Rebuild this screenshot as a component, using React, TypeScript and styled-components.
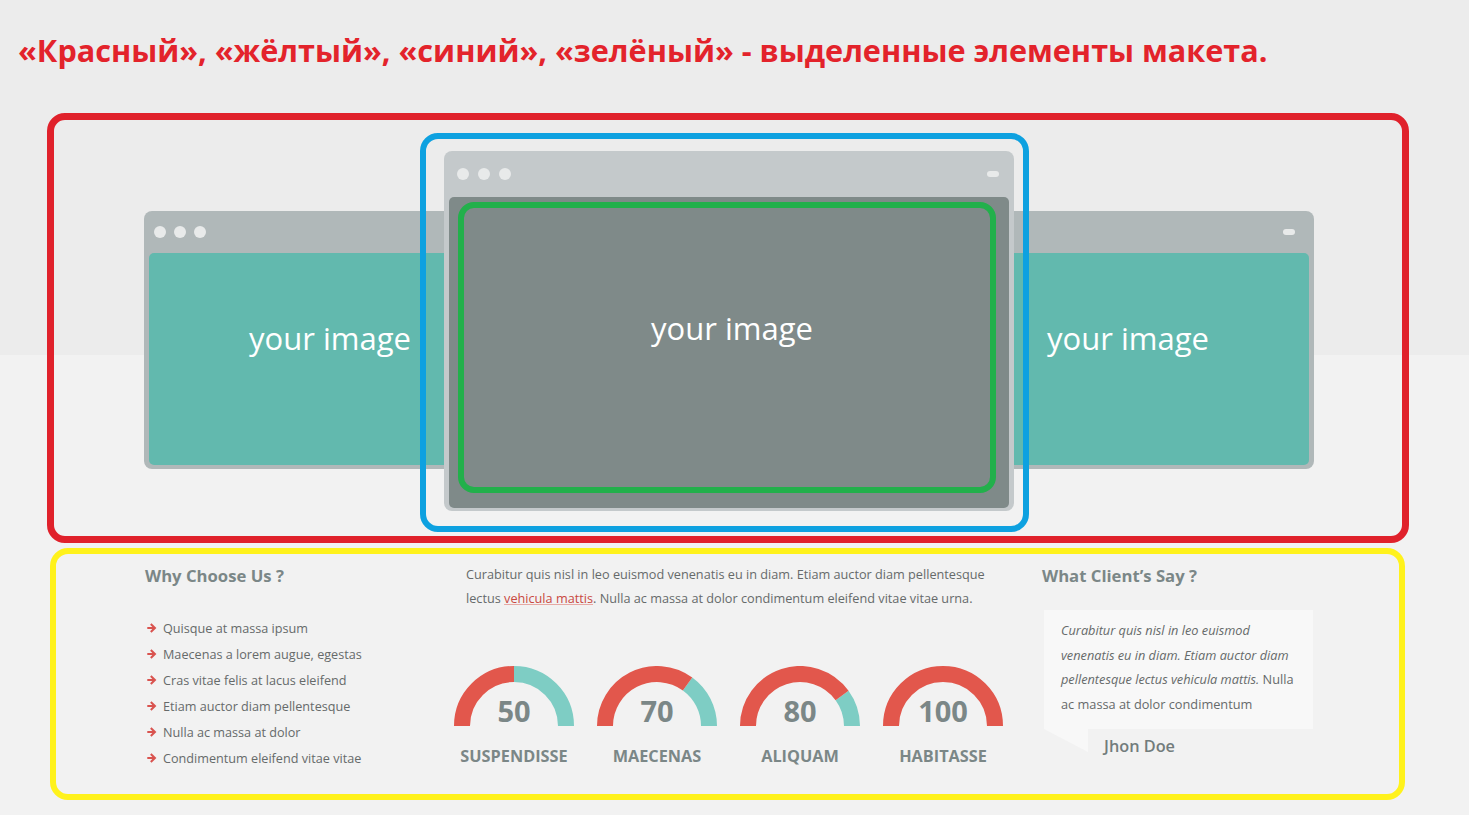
import React from "react";
import styled, { createGlobalStyle } from "styled-components";

const GlobalStyle = createGlobalStyle`
  html, body { margin: 0; padding: 0; }
  body {
    font-family: "Open Sans", "Noto Sans", sans-serif;
    background: #f2f2f2;
  }
`;

const Page = styled.div`
  width: 1469px;
  height: 815px;
  overflow: hidden;
  background: linear-gradient(to bottom, #ececec 0, #ececec 355px, #f2f2f2 355px);
`;

const Title = styled.h1`
  margin: 0;
  padding: 28px 0 0 18px;
  height: 72px;
  box-sizing: border-box;
  font-size: 30.6px;
  line-height: 44px;
  font-weight: 700;
  color: #e3232b;
  white-space: nowrap;
`;

const RedFrame = styled.section`
  margin: 41px 0 0 47px;
  width: 1362px;
  height: 430px;
  box-sizing: border-box;
  border: 7px solid #e0212b;
  border-radius: 18px;
  padding: 13px 0 4px 90px;
  display: flex;
  align-items: flex-start;
`;

const SideWindow = styled.div<{ $overlap?: number }>`
  flex: none;
  width: 372px;
  height: 258px;
  margin-top: 78px;
  margin-left: ${(p) => (p.$overlap ? `-${p.$overlap}px` : "0")};
  box-sizing: border-box;
  background: #b0b8b9;
  border-radius: 8px;
  padding: 0 5px 4px;
  display: flex;
  flex-direction: column;
`;

const TitleBar = styled.div<{ $h: number; $pl: number; $pr: number; $gap: number }>`
  flex: none;
  height: ${(p) => p.$h}px;
  padding: 0 ${(p) => p.$pr}px 0 ${(p) => p.$pl}px;
  display: flex;
  align-items: center;
  justify-content: space-between;

  & > div:first-child {
    display: flex;
    gap: ${(p) => p.$gap}px;
  }
`;

const Dot = styled.span`
  width: 12px;
  height: 12px;
  border-radius: 50%;
  background: #e8eaea;
`;

const Pill = styled.span`
  width: 12px;
  height: 6px;
  border-radius: 3px;
  background: #e8eaea;
`;

const TealScreen = styled.div`
  flex: 1;
  background: #62b9ae;
  border-radius: 5px;
  padding-top: 65px;
  text-align: center;
`;

const ImageLabel = styled.div`
  color: #ffffff;
  font-size: 31px;
  line-height: 40px;
  font-weight: 400;
`;

const BlueFrame = styled.div`
  flex: none;
  position: relative;
  z-index: 2;
  margin-left: -96px;
  width: 609px;
  height: 399px;
  box-sizing: border-box;
  border: 6px solid #0ea1e0;
  border-radius: 18px;
  padding: 12px 9px 15px 18px;
`;

const MainWindow = styled.div`
  width: 570px;
  height: 360px;
  box-sizing: border-box;
  background: #c4c9cb;
  border-radius: 8px;
  padding: 0 5px 3px;
  display: flex;
  flex-direction: column;
`;

const GreyScreen = styled.div`
  flex: 1;
  background: #7f8a89;
  border-radius: 5px;
  padding: 5px 13px 15px 9px;
  display: flex;
`;

const GreenFrame = styled.div`
  flex: 1;
  border: 6px solid #22b04b;
  border-radius: 16px;
  padding: 100px 0 0 10px;
  text-align: center;
`;

const YellowFrame = styled.section`
  margin: 5px 0 0 50px;
  width: 1355px;
  height: 252px;
  box-sizing: border-box;
  border: 6px solid #fff21c;
  border-radius: 18px;
  padding: 8px 0 0 89px;
  display: grid;
  grid-template-columns: 309px 588px 1fr;
`;

const Column = styled.div`
  display: flex;
  flex-direction: column;
  align-items: flex-start;
`;

const Heading = styled.h3`
  margin: 0;
  font-size: 16.7px;
  line-height: 28px;
  font-weight: 700;
  color: #7b8787;
`;

const List = styled.ul`
  list-style: none;
  margin: 25px 0 0;
  padding: 0 0 0 2px;
`;

const Item = styled.li`
  display: flex;
  align-items: center;
  gap: 6px;
  font-size: 12.65px;
  line-height: 26px;
  color: #666a6a;

  svg {
    flex: none;
    display: block;
  }
`;

const Paragraph = styled.p`
  margin: 0;
  padding-left: 12px;
  font-size: 12.7px;
  line-height: 24px;
  color: #666a6a;
  white-space: nowrap;

  a {
    color: #c9483f;
    text-decoration: underline;
    text-decoration-color: #e6a9a4;
  }
`;

const Gauges = styled.div`
  display: flex;
  gap: 23px;
  margin-top: 56px;
`;

const GaugeItem = styled.div`
  width: 120px;
  display: flex;
  flex-direction: column;
  align-items: center;
`;

const Dial = styled.div`
  position: relative;
  width: 120px;
  height: 60px;

  svg {
    display: block;
  }
`;

const DialValue = styled.span`
  position: absolute;
  left: 0;
  right: 0;
  bottom: -2px;
  text-align: center;
  font-size: 29px;
  line-height: 34px;
  font-weight: 700;
  color: #7b8787;
`;

const GaugeLabel = styled.span`
  margin-top: 19px;
  font-size: 16.3px;
  line-height: 22px;
  font-weight: 700;
  color: #7b8787;
  white-space: nowrap;
`;

const QuoteBox = styled.blockquote`
  margin: 20px 0 0 2px;
  width: 269px;
  height: 119px;
  box-sizing: border-box;
  padding: 8px 10px 0 17px;
  background: #f8f8f8;
  font-size: 12.75px;
  line-height: 24.5px;
  color: #666a6a;
  white-space: nowrap;

  em {
    font-style: italic;
  }
`;

const AuthorRow = styled.div`
  display: flex;
  align-items: flex-start;
  margin-left: 2px;
`;

const Tail = styled.span`
  width: 44px;
  height: 23px;
  background: #f8f8f8;
  clip-path: polygon(0 0, 100% 0, 100% 100%);
`;

const Author = styled.span`
  margin: 6px 0 0 16px;
  font-size: 16.3px;
  line-height: 22px;
  font-weight: 600;
  color: #727c7c;
`;

const RED = "#e2574c";
const TEAL = "#7ecdc4";

function Arrow() {
  return (
    <svg width="10" height="10" viewBox="0 0 10 10" aria-hidden="true">
      <path
        d="M0.3 3.9 H5.3 L3.1 1.7 L4.5 0.3 L9.4 5 L4.5 9.7 L3.1 8.3 L5.3 6.1 H0.3 Z"
        fill="#d9534f"
      />
    </svg>
  );
}

function Gauge({ value, label }: { value: number; label: string }) {
  const r = 52;
  const cx = 60;
  const cy = 60;
  const theta = (Math.PI * value) / 100;
  const px = cx - r * Math.cos(theta);
  const py = cy - r * Math.sin(theta);
  const start = `M ${cx - r} ${cy}`;
  const red = `${start} A ${r} ${r} 0 0 1 ${px.toFixed(2)} ${py.toFixed(2)}`;
  const teal = `M ${px.toFixed(2)} ${py.toFixed(2)} A ${r} ${r} 0 0 1 ${cx + r} ${cy}`;
  return (
    <GaugeItem>
      <Dial>
        <svg width="120" height="60" viewBox="0 0 120 60">
          {value < 100 && <path d={teal} fill="none" stroke={TEAL} strokeWidth="16" />}
          <path d={red} fill="none" stroke={RED} strokeWidth="16" />
        </svg>
        <DialValue>{value}</DialValue>
      </Dial>
      <GaugeLabel>{label}</GaugeLabel>
    </GaugeItem>
  );
}

function Bar({ big }: { big?: boolean }) {
  return big ? (
    <TitleBar $h={46} $pl={8} $pr={10} $gap={9}>
      <div>
        <Dot />
        <Dot />
        <Dot />
      </div>
      <Pill />
    </TitleBar>
  ) : (
    <TitleBar $h={42} $pl={5} $pr={14} $gap={8}>
      <div>
        <Dot />
        <Dot />
        <Dot />
      </div>
      <Pill />
    </TitleBar>
  );
}

const items = [
  "Quisque at massa ipsum",
  "Maecenas a lorem augue, egestas",
  "Cras vitae felis at lacus eleifend",
  "Etiam auctor diam pellentesque",
  "Nulla ac massa at dolor",
  "Condimentum eleifend vitae vitae",
];

const gauges = [
  { value: 50, label: "SUSPENDISSE" },
  { value: 70, label: "MAECENAS" },
  { value: 80, label: "ALIQUAM" },
  { value: 100, label: "HABITASSE" },
];

export default function App() {
  return (
    <>
      <GlobalStyle />
      <Page>
        <Title>«Красный», «жёлтый», «синий», «зелёный» - выделенные элементы макета.</Title>
        <RedFrame>
          <SideWindow>
            <Bar />
            <TealScreen>
              <ImageLabel>your image</ImageLabel>
            </TealScreen>
          </SideWindow>
          <BlueFrame>
            <MainWindow>
              <Bar big />
              <GreyScreen>
                <GreenFrame>
                  <ImageLabel>your image</ImageLabel>
                </GreenFrame>
              </GreyScreen>
            </MainWindow>
          </BlueFrame>
          <SideWindow $overlap={87}>
            <Bar />
            <TealScreen>
              <ImageLabel>your image</ImageLabel>
            </TealScreen>
          </SideWindow>
        </RedFrame>
        <YellowFrame>
          <Column>
            <Heading>Why Choose Us ?</Heading>
            <List>
              {items.map((t) => (
                <Item key={t}>
                  <Arrow />
                  {t}
                </Item>
              ))}
            </List>
          </Column>
          <Column>
            <Paragraph>
              Curabitur quis nisl in leo euismod venenatis eu in diam. Etiam auctor diam pellentesque
              <br />
              lectus <a href="#">vehicula mattis</a>. Nulla ac massa at dolor condimentum eleifend vitae vitae urna.
            </Paragraph>
            <Gauges>
              {gauges.map((g) => (
                <Gauge key={g.label} value={g.value} label={g.label} />
              ))}
            </Gauges>
          </Column>
          <Column>
            <Heading>What Client’s Say ?</Heading>
            <QuoteBox>
              <em>Curabitur quis nisl in leo euismod</em>
              <br />
              <em>venenatis eu in diam. Etiam auctor diam</em>
              <br />
              <em>pellentesque lectus vehicula mattis.</em> Nulla
              <br />
              ac massa at dolor condimentum
            </QuoteBox>
            <AuthorRow>
              <Tail />
              <Author>Jhon Doe</Author>
            </AuthorRow>
          </Column>
        </YellowFrame>
      </Page>
    </>
  );
}
